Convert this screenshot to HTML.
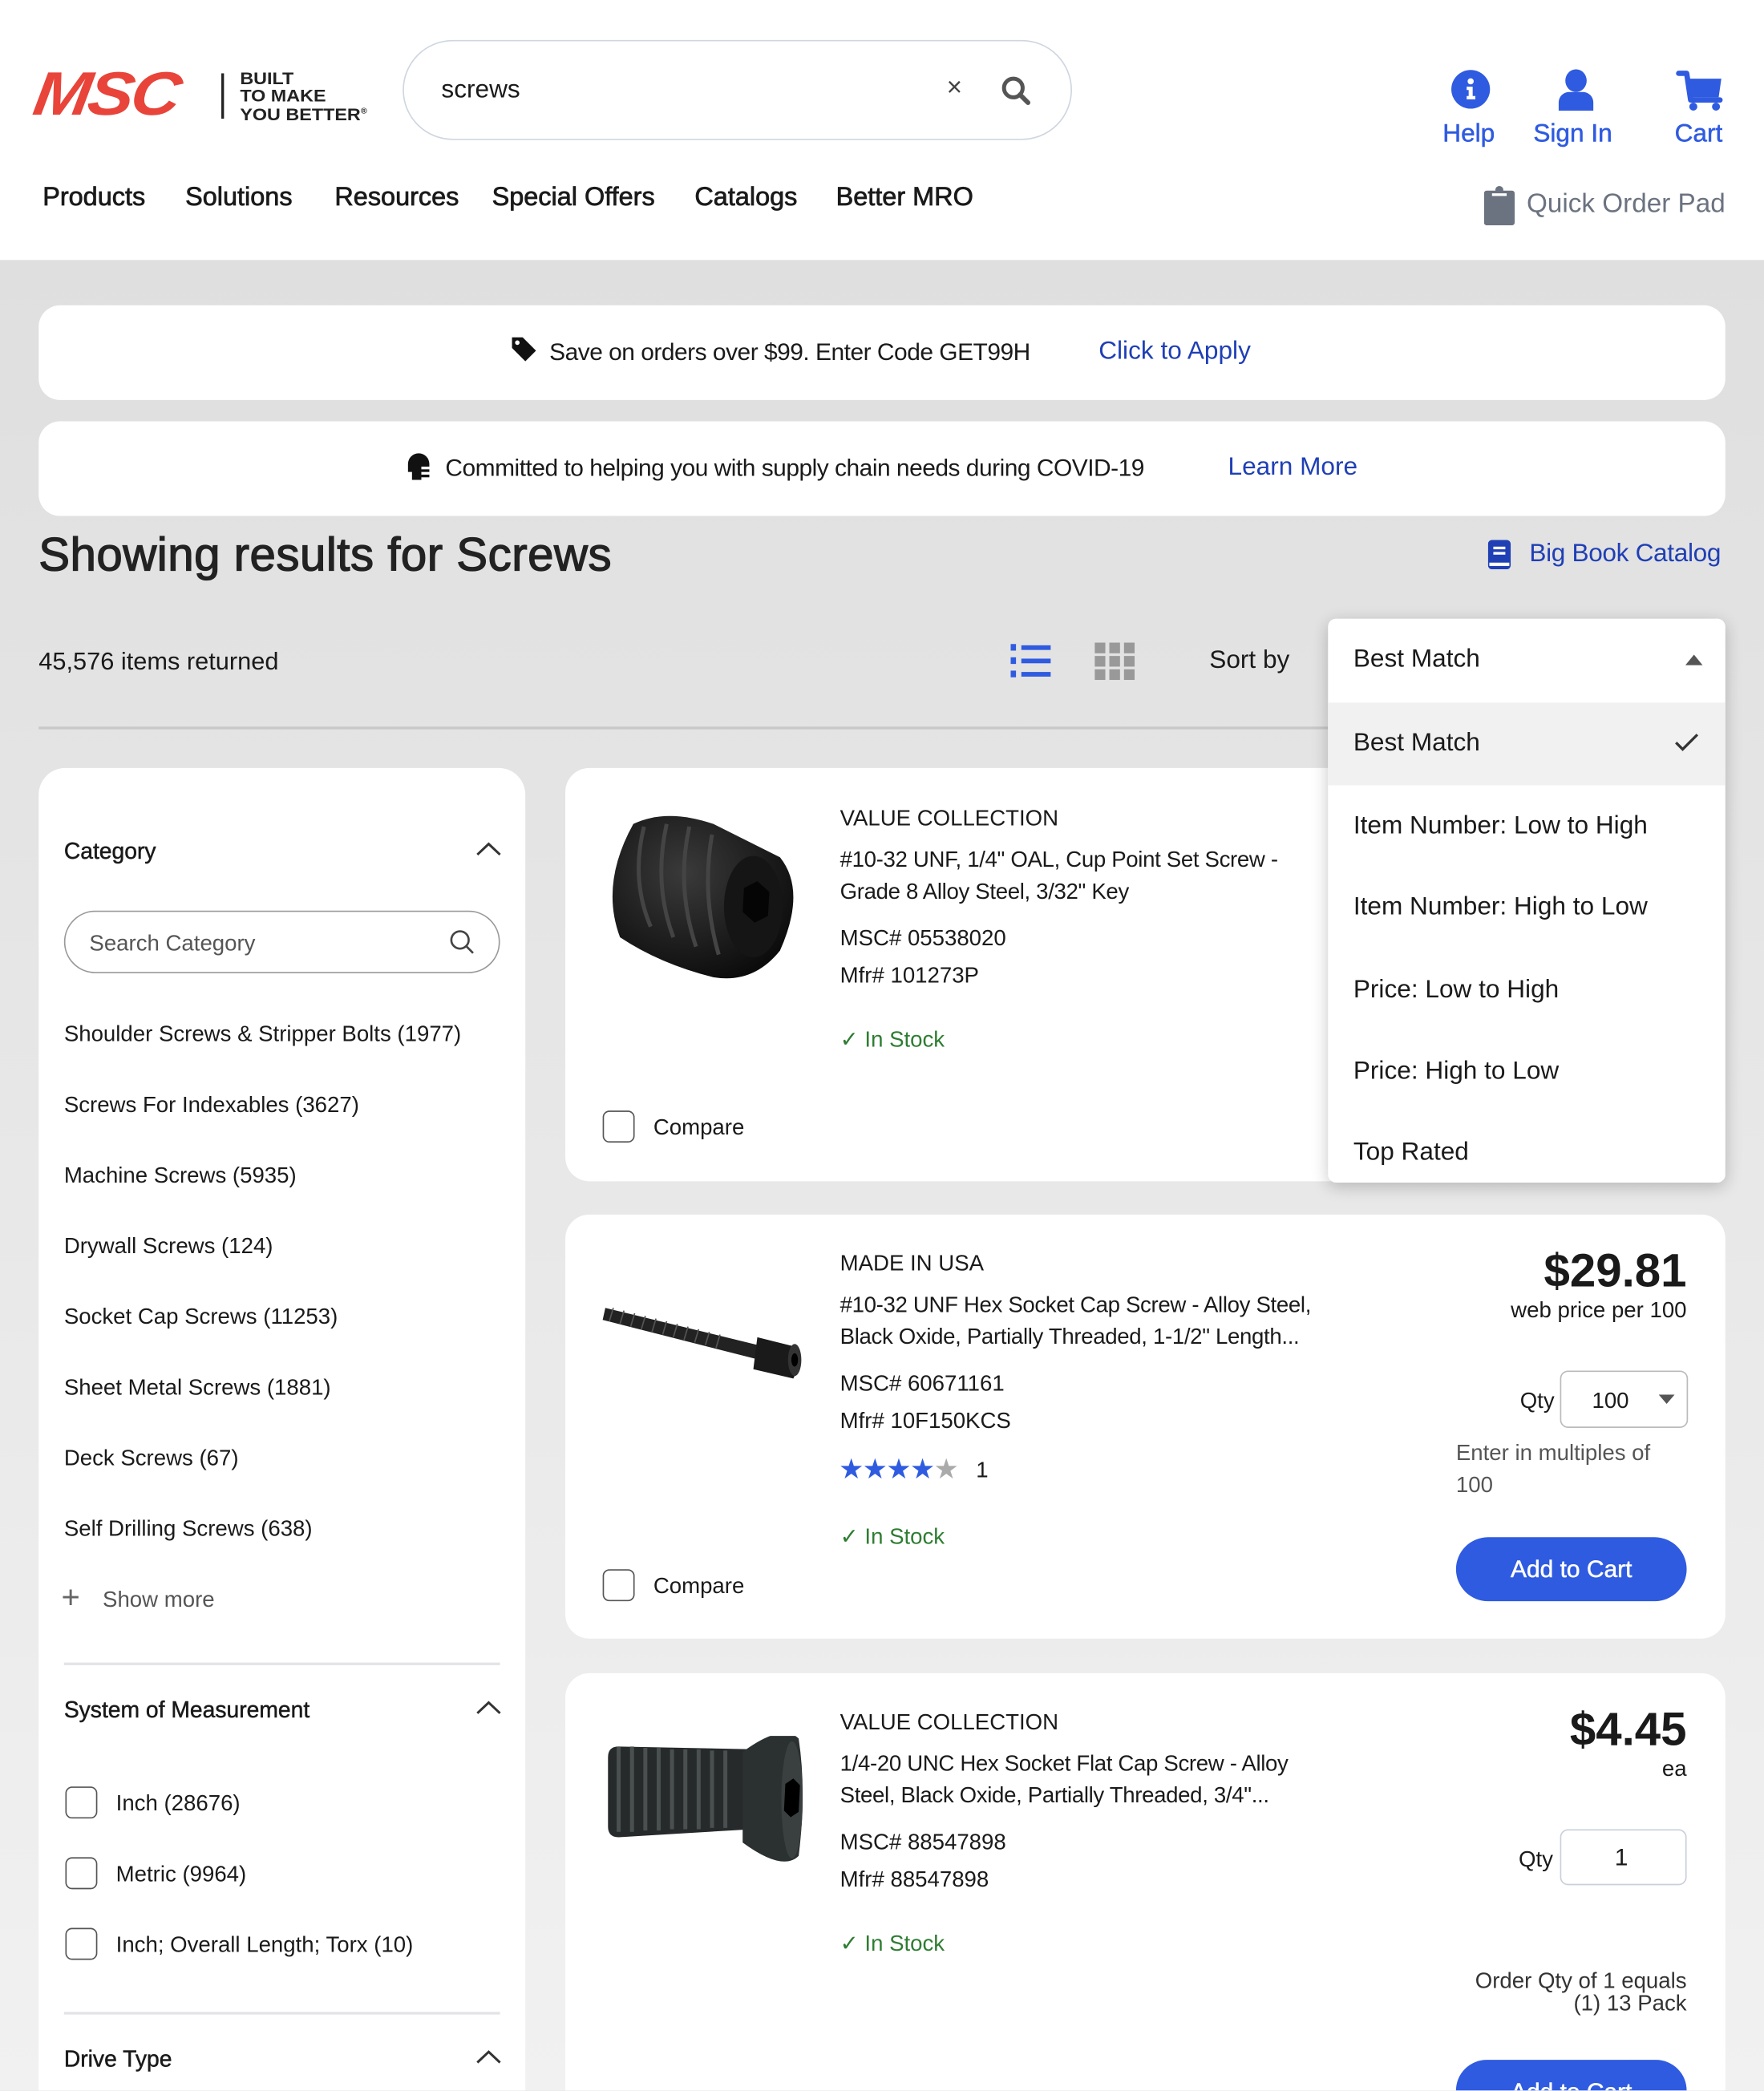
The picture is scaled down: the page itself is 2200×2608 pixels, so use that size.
<!DOCTYPE html>
<html><head><meta charset="utf-8">
<style>
*{margin:0;padding:0;box-sizing:border-box}
html,body{width:2200px;height:2608px;overflow:hidden;background:#e8e8e8}
#w{position:absolute;left:0;top:0;width:1323px;height:1568px;transform:scale(1.66289);transform-origin:0 0;font-family:"Liberation Sans",Arial,sans-serif;color:#1a1a1a;background:linear-gradient(#dfdfdf 195px,#e4e4e4 600px,#f1f1f1 1568px);overflow:hidden}
.a{position:absolute;white-space:nowrap}
.hdr{position:absolute;left:0;top:0;width:1323px;height:195px;background:#fff}
.blue{color:#2f5be0}
.lnk{color:#1f3fb5}
.card{position:absolute;background:#fff;border-radius:18px}
.cb{position:absolute;width:24px;height:24px;border:1.5px solid #555;border-radius:5px;background:#fff}
.t17{font-size:16.6px}
.stock{color:#2e7d32;font-size:16.6px}
.btn{position:absolute;background:#2f5be0;color:#fff;border-radius:24px;font-size:18px;text-align:center;-webkit-text-stroke:.3px #fff}
.nav{font-size:19.5px;-webkit-text-stroke:.45px #1a1a1a;top:137px}
.med{-webkit-text-stroke:.3px #1a1a1a}
.dd div{position:absolute;left:0;width:298px;height:62px;font-size:19px;padding-left:19px;line-height:62px}
</style></head><body><div id="w">
<div class="hdr">
  <div class="a" style="left:30px;top:44px;font-size:46px;font-weight:900;font-style:italic;color:#e8443a;letter-spacing:-2px;transform:scaleX(1.12) skewX(-8deg);transform-origin:0 0;line-height:52px">MSC</div>
  <div class="a" style="left:166px;top:55px;width:2px;height:34px;background:#222"></div>
  <div class="a" style="left:180px;top:52px;font-size:13px;font-weight:700;line-height:13px;color:#222;transform:scaleX(1.08);transform-origin:0 0">BUILT<br>TO MAKE<br>YOU BETTER<sup style="font-size:6px">®</sup></div>
  <div class="a" style="left:302px;top:30px;width:502px;height:75px;border:1.5px solid #cfd6e0;border-radius:38px"></div>
  <div class="a" style="left:331px;top:57px;font-size:19px">screws</div>
  <div class="a" style="left:710px;top:55px;font-size:20px;color:#444">×</div>
  <svg class="a" style="left:750px;top:56px" width="24" height="24" viewBox="0 0 24 24"><circle cx="10" cy="10" r="7" fill="none" stroke="#555" stroke-width="3"/><path d="M15 15l6 6" stroke="#555" stroke-width="3.5" stroke-linecap="round"/></svg>
  <svg class="a" style="left:1088px;top:52px" width="30" height="30" viewBox="0 0 30 30"><circle cx="15" cy="15" r="14.5" fill="#2f5be0"/><circle cx="15" cy="9" r="2.3" fill="#fff"/><path d="M12 13h4.5v7h2v2.5h-6.5v-2.5h1.5v-4.5h-1.5z" fill="#fff"/></svg>
  <div class="a blue" style="left:1082px;top:90px;font-size:19px;-webkit-text-stroke:.3px #2f5be0">Help</div>
  <svg class="a" style="left:1167px;top:52px" width="30" height="31" viewBox="0 0 30 31"><ellipse cx="15" cy="8.5" rx="8" ry="8.5" fill="#2f5be0"/><path d="M2 31v-6c0-5 4-8 8-8h10c4 0 8 3 8 8v6z" fill="#2f5be0"/></svg>
  <div class="a blue" style="left:1150px;top:90px;font-size:19px;-webkit-text-stroke:.3px #2f5be0">Sign In</div>
  <svg class="a" style="left:1256px;top:52px" width="40" height="32" viewBox="0 0 40 32"><path d="M3 3h6l3 20h22" fill="none" stroke="#2f5be0" stroke-width="4" stroke-linecap="round" stroke-linejoin="round"/><path d="M10 7h25l-2 14H12z" fill="#2f5be0"/><circle cx="14" cy="28" r="3" fill="#2f5be0"/><circle cx="31" cy="28" r="3" fill="#2f5be0"/></svg>
  <div class="a blue" style="left:1256px;top:90px;font-size:19px;-webkit-text-stroke:.3px #2f5be0">Cart</div>
  <div class="a nav" style="left:32px">Products</div>
  <div class="a nav" style="left:139px">Solutions</div>
  <div class="a nav" style="left:251px">Resources</div>
  <div class="a nav" style="left:369px">Special Offers</div>
  <div class="a nav" style="left:521px">Catalogs</div>
  <div class="a nav" style="left:627px">Better MRO</div>
  <svg class="a" style="left:1113px;top:139px" width="24" height="30" viewBox="0 0 24 30"><rect x="0" y="4" width="23" height="26" rx="2" fill="#6b7280"/><circle cx="11.5" cy="3.5" r="3" fill="#6b7280"/><rect x="6" y="6" width="11" height="2" fill="#fff"/></svg>
  <div class="a" style="left:1145px;top:142px;font-size:20px;color:#6b7280">Quick Order Pad</div>
</div>

<div class="card" style="left:29px;top:229px;width:1265px;height:71px;border-radius:16px"></div>
<svg class="a" style="left:383px;top:252px" width="20" height="20" viewBox="0 0 20 20"><path d="M1 1h8l10 10-8 8L1 9z" fill="#111"/><circle cx="5" cy="5" r="1.7" fill="#fff"/></svg>
<div class="a" style="left:412px;top:254px;font-size:18px;letter-spacing:-.3px">Save on orders over $99. Enter Code GET99H</div>
<div class="a lnk" style="left:824px;top:253px;font-size:19px">Click to Apply</div>

<div class="card" style="left:29px;top:316px;width:1265px;height:71px;border-radius:16px"></div>
<svg class="a" style="left:304px;top:338px" width="20" height="22" viewBox="0 0 20 22"><path d="M2 10a8 8 0 0 1 16 0v2h-6v10H5v-6H2z" fill="#111"/><rect x="12" y="14" width="6" height="2" fill="#111"/><rect x="12" y="18" width="6" height="2" fill="#111"/></svg>
<div class="a" style="left:334px;top:341px;font-size:18px;letter-spacing:-.3px">Committed to helping you with supply chain needs during COVID-19</div>
<div class="a lnk" style="left:921px;top:340px;font-size:19px">Learn More</div>

<div class="a" style="left:29px;top:397px;font-size:35px;color:#222;-webkit-text-stroke:.8px #222;letter-spacing:.3px">Showing results for Screws</div>
<svg class="a" style="left:1116px;top:405px" width="18" height="22" viewBox="0 0 18 22"><rect x="0" y="0" width="17" height="22" rx="3" fill="#1f3fb5"/><rect x="4" y="5" width="9" height="2" fill="#fff"/><rect x="4" y="9" width="9" height="2" fill="#fff"/><rect x="1" y="17" width="15" height="2.5" fill="#fff"/></svg>
<div class="a lnk" style="left:1147px;top:405px;font-size:19px;letter-spacing:-.2px">Big Book Catalog</div>

<div class="a" style="left:29px;top:485px;font-size:18.5px">45,576 items returned</div>
<svg class="a" style="left:758px;top:483px" width="31" height="26" viewBox="0 0 31 26"><g fill="#2f5be0"><rect x="0" y="0" width="4" height="5"/><rect x="8" y="1" width="22" height="3.5"/><rect x="0" y="10" width="4" height="5"/><rect x="8" y="11" width="22" height="3.5"/><rect x="0" y="20" width="4" height="5"/><rect x="8" y="21" width="22" height="3.5"/></g></svg>
<svg class="a" style="left:821px;top:482px" width="30" height="28" viewBox="0 0 30 28"><g fill="#999"><rect x="0" y="0" width="8" height="8"/><rect x="11" y="0" width="8" height="8"/><rect x="22" y="0" width="8" height="8"/><rect x="0" y="10" width="8" height="8"/><rect x="11" y="10" width="8" height="8"/><rect x="22" y="10" width="8" height="8"/><rect x="0" y="20" width="8" height="8"/><rect x="11" y="20" width="8" height="8"/><rect x="22" y="20" width="8" height="8"/></g></svg>
<div class="a" style="left:907px;top:485px;font-size:19px">Sort by</div>
<div class="a" style="left:29px;top:545px;width:967px;height:2px;background:#c8c8c8"></div>

<!-- sidebar -->
<div class="card" style="left:29px;top:576px;width:365px;height:1030px;border-radius:20px"></div>
<div class="a med" style="left:48px;top:629px;font-size:17px">Category</div>
<svg class="a" style="left:357px;top:631px" width="19" height="12" viewBox="0 0 19 12"><path d="M1 10l8.5-8 8.5 8" fill="none" stroke="#333" stroke-width="1.8"/></svg>
<div class="a" style="left:48px;top:683px;width:327px;height:47px;border:1.5px solid #999;border-radius:24px"></div>
<div class="a" style="left:67px;top:698px;font-size:16.6px;color:#555">Search Category</div>
<svg class="a" style="left:337px;top:697px" width="19" height="19" viewBox="0 0 19 19"><circle cx="8" cy="8" r="6.5" fill="none" stroke="#444" stroke-width="1.6"/><path d="M12.8 12.8l5 5" stroke="#444" stroke-width="1.6"/></svg>
<div class="a t17" style="left:48px;top:766px">Shoulder Screws &amp; Stripper Bolts (1977)</div>
<div class="a t17" style="left:48px;top:819px">Screws For Indexables (3627)</div>
<div class="a t17" style="left:48px;top:872px">Machine Screws (5935)</div>
<div class="a t17" style="left:48px;top:925px">Drywall Screws (124)</div>
<div class="a t17" style="left:48px;top:978px">Socket Cap Screws (11253)</div>
<div class="a t17" style="left:48px;top:1031px">Sheet Metal Screws (1881)</div>
<div class="a t17" style="left:48px;top:1084px">Deck Screws (67)</div>
<div class="a t17" style="left:48px;top:1137px">Self Drilling Screws (638)</div>
<div class="a" style="left:46px;top:1185px;font-size:24px;color:#666;font-weight:300">+</div>
<div class="a t17" style="left:77px;top:1190px;color:#555">Show more</div>
<div class="a" style="left:48px;top:1247px;width:327px;height:2px;background:#e3e3e8"></div>
<div class="a med" style="left:48px;top:1273px;font-size:17px">System of Measurement</div>
<svg class="a" style="left:357px;top:1275px" width="19" height="12" viewBox="0 0 19 12"><path d="M1 10l8.5-8 8.5 8" fill="none" stroke="#333" stroke-width="1.8"/></svg>
<div class="cb" style="left:49px;top:1340px"></div><div class="a t17" style="left:87px;top:1343px">Inch (28676)</div>
<div class="cb" style="left:49px;top:1393px"></div><div class="a t17" style="left:87px;top:1396px">Metric (9964)</div>
<div class="cb" style="left:49px;top:1446px"></div><div class="a t17" style="left:87px;top:1449px">Inch; Overall Length; Torx (10)</div>
<div class="a" style="left:48px;top:1509px;width:327px;height:2px;background:#e3e3e8"></div>
<div class="a med" style="left:48px;top:1535px;font-size:17px">Drive Type</div>
<svg class="a" style="left:357px;top:1537px" width="19" height="12" viewBox="0 0 19 12"><path d="M1 10l8.5-8 8.5 8" fill="none" stroke="#333" stroke-width="1.8"/></svg>

<!-- card 1 -->
<div class="card" style="left:424px;top:576px;width:870px;height:310px"></div>
<svg class="a" style="left:455px;top:608px" width="145" height="128" viewBox="0 0 145 128"><defs><radialGradient id="g1" cx="0.4" cy="0.35" r="0.7"><stop offset="0" stop-color="#3a3a3a"/><stop offset="1" stop-color="#0c0c0c"/></radialGradient></defs><path d="M20 10q25-12 60 0l50 25q20 25 0 70q-20 25-50 20q-40-10-70-30q-15-40 10-85z" fill="url(#g1)"/><g stroke="#444" stroke-width="3" fill="none"><path d="M28 12q-10 40 5 75"/><path d="M45 10q-10 45 5 85"/><path d="M62 12q-10 45 5 90"/><path d="M79 18q-8 45 5 90"/></g><ellipse cx="110" cy="72" rx="22" ry="38" fill="#151515"/><path d="M103 58l10-5 9 8-1 18-10 5-9-8z" fill="#050505"/></svg>
<div class="a t17" style="left:630px;top:604px">VALUE COLLECTION</div>
<div class="a t17" style="left:630px;top:633px;line-height:24px;letter-spacing:-.2px">#10-32 UNF, 1/4" OAL, Cup Point Set Screw -<br>Grade 8 Alloy Steel, 3/32" Key</div>
<div class="a t17" style="left:630px;top:694px">MSC# 05538020</div>
<div class="a t17" style="left:630px;top:722px">Mfr# 101273P</div>
<div class="a stock" style="left:630px;top:770px">✓ In Stock</div>
<div class="cb" style="left:452px;top:833px"></div><div class="a t17" style="left:490px;top:836px">Compare</div>

<!-- card 2 -->
<div class="card" style="left:424px;top:911px;width:870px;height:318px"></div>
<svg class="a" style="left:450px;top:975px" width="155" height="62" viewBox="0 0 155 62"><path d="M4 6l115 28-3 10L2 15z" fill="#222"/><g stroke="#555" stroke-width="1"><path d="M10 6l-3 10M18 8l-3 10M26 10l-3 10M34 12l-3 10M42 14l-3 10M50 16l-3 10M58 18l-3 10M66 20l-3 10M74 22l-3 10M82 24l-3 10M90 26l-3 10"/></g><path d="M118 28l28 7q6 3 3 16l-4 8-30-7z" fill="#1a1a1a"/><ellipse cx="146" cy="45" rx="5" ry="12" fill="#333"/><ellipse cx="146" cy="45" rx="2.5" ry="5" fill="#000"/></svg>
<div class="a t17" style="left:630px;top:938px">MADE IN USA</div>
<div class="a t17" style="left:630px;top:967px;line-height:24px;letter-spacing:-.2px">#10-32 UNF Hex Socket Cap Screw - Alloy Steel,<br>Black Oxide, Partially Threaded, 1-1/2" Length...</div>
<div class="a t17" style="left:630px;top:1028px">MSC# 60671161</div>
<div class="a t17" style="left:630px;top:1056px">Mfr# 10F150KCS</div>
<div class="a" style="left:629px;top:1090px;font-size:21px;color:#2f5be0;letter-spacing:-1px">★★★★<span style="color:#aaa">★</span></div>
<div class="a t17" style="left:732px;top:1093px">1</div>
<div class="a stock" style="left:630px;top:1143px">✓ In Stock</div>
<div class="cb" style="left:452px;top:1177px"></div><div class="a t17" style="left:490px;top:1180px">Compare</div>
<div class="a" style="right:58px;top:934px;font-size:35px;font-weight:700">$29.81</div>
<div class="a t17" style="right:58px;top:973px">web price per 100</div>
<div class="a t17" style="left:1140px;top:1041px">Qty</div>
<div class="a" style="left:1170px;top:1028px;width:96px;height:43px;border:1.5px solid #bbb;border-radius:6px"></div>
<div class="a t17" style="left:1194px;top:1041px">100</div>
<svg class="a" style="left:1244px;top:1046px" width="12" height="7"><path d="M0 0h12L6 7z" fill="#555"/></svg>
<div class="a" style="left:1092px;top:1078px;font-size:16.6px;line-height:24px;color:#555">Enter in multiples of<br>100</div>
<div class="btn" style="left:1092px;top:1153px;width:173px;height:48px;line-height:48px">Add to Cart</div>

<!-- card 3 -->
<div class="card" style="left:424px;top:1255px;width:870px;height:330px"></div>
<svg class="a" style="left:452px;top:1302px" width="152" height="96" viewBox="0 0 152 96"><path d="M4 16q0-8 8-8l100 2 0 60-100 6q-8 0-8-8z" fill="#262a2a"/><g stroke="#4a4f4f" stroke-width="3"><path d="M12 8v64M22 8v64M32 9v62M42 9v62M52 10v60M62 10v60M72 10v60M82 11v58M92 11v58"/></g><path d="M105 12q30-22 42-10q6 40 0 88q-12 12-42-10z" fill="#2b3030"/><ellipse cx="142" cy="48" rx="8" ry="44" fill="#3a4040"/><path d="M137 36l6-4 5 5-1 20-6 4-5-5z" fill="#000"/></svg>
<div class="a t17" style="left:630px;top:1282px">VALUE COLLECTION</div>
<div class="a t17" style="left:630px;top:1311px;line-height:24px;letter-spacing:-.2px">1/4-20 UNC Hex Socket Flat Cap Screw - Alloy<br>Steel, Black Oxide, Partially Threaded, 3/4"...</div>
<div class="a t17" style="left:630px;top:1372px">MSC# 88547898</div>
<div class="a t17" style="left:630px;top:1400px">Mfr# 88547898</div>
<div class="a stock" style="left:630px;top:1448px">✓ In Stock</div>
<div class="a" style="right:58px;top:1278px;font-size:35px;font-weight:700">$4.45</div>
<div class="a t17" style="right:58px;top:1317px">ea</div>
<div class="a t17" style="left:1139px;top:1385px">Qty</div>
<div class="a" style="left:1170px;top:1372px;width:95px;height:42px;border:1.5px solid #c9d0da;border-radius:6px"></div>
<div class="a" style="left:1211px;top:1383px;font-size:18px">1</div>
<div class="a" style="right:58px;top:1477px;font-size:16.6px;line-height:17px;text-align:right;color:#333">Order Qty of 1 equals<br>(1) 13 Pack</div>
<div class="btn" style="left:1092px;top:1545px;width:173px;height:23px;line-height:48px;border-radius:24px 24px 0 0;overflow:hidden">Add to Cart</div>

<!-- dropdown -->
<div class="a dd" style="left:996px;top:464px;width:298px;height:423px;background:#fff;border-radius:6px;box-shadow:0 3px 12px rgba(0,0,0,.22);overflow:hidden">
  <div style="top:0">Best Match</div>
  <svg style="position:absolute;left:268px;top:27px" width="13" height="8"><path d="M0 8L6.5 0 13 8z" fill="#555"/></svg>
  <div style="top:63px;background:#f1f1f1">Best Match</div>
  <svg style="position:absolute;left:260px;top:86px" width="18" height="14"><path d="M1 7l5 5L17 1" fill="none" stroke="#333" stroke-width="2"/></svg>
  <div style="top:125px">Item Number: Low to High</div>
  <div style="top:186px">Item Number: High to Low</div>
  <div style="top:248px">Price: Low to High</div>
  <div style="top:309px">Price: High to Low</div>
  <div style="top:370px">Top Rated</div>
</div>
</div></body></html>
